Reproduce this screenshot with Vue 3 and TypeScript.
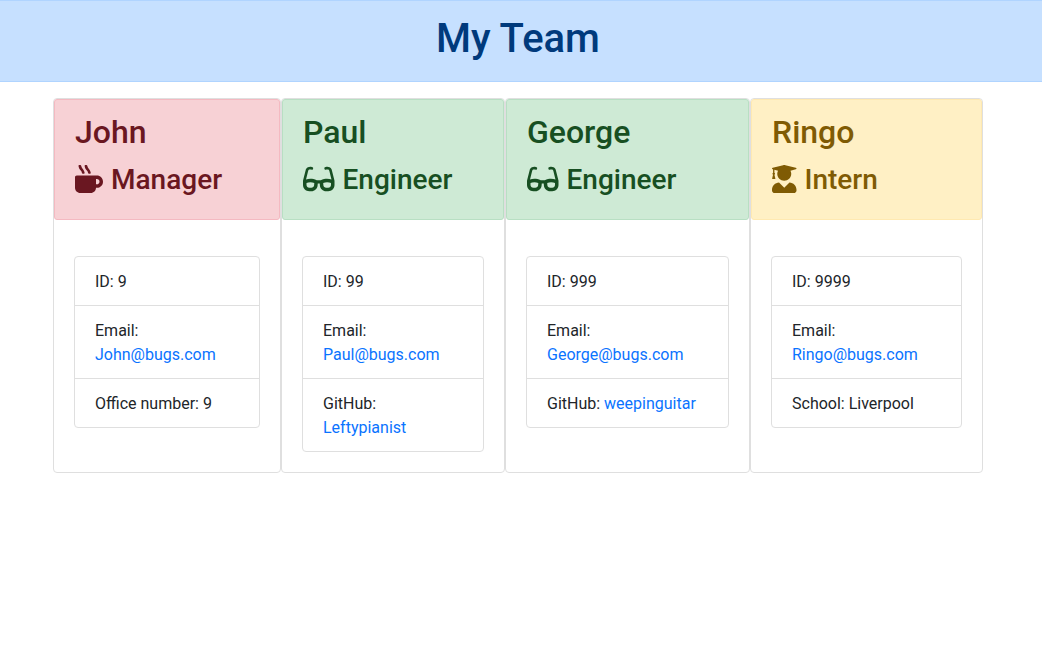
<script setup lang="ts">
type Role = 'Manager' | 'Engineer' | 'Intern'

interface Detail {
  label: string
  value: string
  href?: string
}

interface Member {
  name: string
  role: Role
  details: Detail[]
}

interface Icon {
  viewBox: string
  path: string
}

const icons: Record<Role, Icon> = {
  Manager: {
    viewBox: '0 0 512 512',
    path: 'M127.1 146.5c1.3 7.7 8 13.5 16 13.5h16.5c9.8 0 17.6-8.5 16.3-18-3.8-28.2-16.4-54.2-36.6-74.7-14.4-14.7-23.6-33.3-26.4-53.5C111.8 5.9 105 0 96.8 0H80.4C70.6 0 63 8.5 64.1 18c3.9 31.9 18 61.3 40.6 84.4 12 12.2 19.7 27.5 22.4 44.1zm112 0c1.3 7.7 8 13.5 16 13.5h16.5c9.8 0 17.6-8.5 16.3-18-3.8-28.2-16.4-54.2-36.6-74.7-14.4-14.7-23.6-33.3-26.4-53.5C223.8 5.9 217 0 208.8 0h-16.4c-9.8 0-17.5 8.5-16.3 18 3.9 31.9 18 61.3 40.6 84.4 12 12.2 19.7 27.5 22.4 44.1zM400 192H32c-17.7 0-32 14.3-32 32v192c0 53 43 96 96 96h192c53 0 96-43 96-96h16c61.8 0 112-50.2 112-112s-50.2-112-112-112zm0 160h-16v-96h16c26.5 0 48 21.5 48 48s-21.5 48-48 48z',
  },
  Engineer: {
    viewBox: '0 0 576 512',
    path: 'M574.1 280.37L528.75 98.66c-5.91-23.7-21.59-44.05-43-55.81-21.44-11.73-46.97-14.11-70.19-6.33l-15.25 5.08c-8.39 2.79-12.92 11.86-10.12 20.24l5.06 15.18c2.79 8.38 11.85 12.91 20.23 10.12l13.18-4.39c10.87-3.62 23-3.57 33.16 1.73 10.29 5.37 17.57 14.56 20.37 25.82l38.46 153.82c-22.19-6.81-49.79-12.46-81.2-12.46-34.77 0-73.98 7.02-114.85 26.74h-73.18c-40.87-19.74-80.08-26.75-114.86-26.75-31.42 0-59.02 5.65-81.21 12.46l38.46-153.83c2.79-11.25 10.09-20.45 20.38-25.81 10.16-5.3 22.28-5.35 33.15-1.73l13.17 4.39c8.38 2.79 17.44-1.74 20.23-10.12l5.06-15.18c2.8-8.38-1.73-17.45-10.12-20.24l-15.25-5.08c-23.22-7.78-48.75-5.41-70.19 6.33-21.41 11.77-37.09 32.11-43 55.8L1.9 280.37A64.218 64.218 0 0 0 0 295.86v70.25C0 429.01 51.58 480 115.2 480h37.12c60.28 0 110.37-45.94 114.88-105.37l2.93-38.63h35.75l2.93 38.63C313.31 434.06 363.4 480 423.68 480h37.12c63.62 0 115.2-50.99 115.2-113.88v-70.25c0-5.23-.64-10.43-1.9-15.5zm-370.72 89.42c-1.97 25.91-24.4 46.21-51.06 46.21H115.2C86.97 416 64 393.62 64 366.11v-37.54c18.12-6.49 43.42-12.92 72.58-12.92 23.86 0 47.26 4.33 69.93 12.92l-3.13 41.22zM512 366.12c0 27.51-22.97 49.88-51.2 49.88h-37.12c-26.67 0-49.1-20.3-51.06-46.21l-3.13-41.22c22.67-8.59 46.08-12.92 69.95-12.92 29.12 0 54.43 6.44 72.55 12.93v37.54z',
  },
  Intern: {
    viewBox: '0 0 448 512',
    path: 'M319.4 320.6L224 416l-95.4-95.4C57.1 323.7 0 382.2 0 454.4v9.6c0 26.5 21.5 48 48 48h352c26.5 0 48-21.5 48-48v-9.6c0-72.2-57.1-130.7-128.6-133.8zM13.6 79.8l6.4 1.5v58.4c-7 4.2-12 11.5-12 20.3 0 8.4 4.6 15.4 11.1 19.7L3.5 242c-1.7 6.9 2.1 14 7.6 14h41.8c5.5 0 9.3-7.1 7.6-14l-15.6-62.3C51.4 175.4 56 168.4 56 160c0-8.8-5-16.1-12-20.3V87.1l66 15.9c-8.6 17.2-14 36.4-14 57 0 70.7 57.3 128 128 128s128-57.3 128-128c0-20.6-5.3-39.8-14-57l96.3-23.2c18.2-4.4 18.2-27.1 0-31.5l-190.4-46c-13-3.1-26.7-3.1-39.7 0L13.6 48.2c-18.1 4.4-18.1 27.2 0 31.6z',
  },
}

const email = (address: string): Detail => ({
  label: 'Email',
  value: address,
  href: `mailto:${address}`,
})

const github = (user: string): Detail => ({
  label: 'GitHub',
  value: user,
  href: `https://github.com/${user}`,
})

const team: Member[] = [
  {
    name: 'John',
    role: 'Manager',
    details: [{ label: 'ID', value: '9' }, email('John@bugs.com'), { label: 'Office number', value: '9' }],
  },
  {
    name: 'Paul',
    role: 'Engineer',
    details: [{ label: 'ID', value: '99' }, email('Paul@bugs.com'), github('Leftypianist')],
  },
  {
    name: 'George',
    role: 'Engineer',
    details: [{ label: 'ID', value: '999' }, email('George@bugs.com'), github('weepinguitar')],
  },
  {
    name: 'Ringo',
    role: 'Intern',
    details: [{ label: 'ID', value: '9999' }, email('Ringo@bugs.com'), { label: 'School', value: 'Liverpool' }],
  },
]
</script>

<template>
  <div class="page">
    <header class="banner">
      <h1>My Team</h1>
    </header>
    <main class="team">
      <article v-for="member in team" :key="member.name" class="card">
        <div class="card-head" :class="member.role.toLowerCase()">
          <h2>{{ member.name }}</h2>
          <h3>
            <svg class="icon" :viewBox="icons[member.role].viewBox" aria-hidden="true">
              <path :d="icons[member.role].path" fill="currentColor" />
            </svg>
            <span>{{ member.role }}</span>
          </h3>
        </div>
        <div class="card-body">
          <ul class="details">
            <li v-for="detail in member.details" :key="detail.label">
              {{ detail.label }}:
              <a v-if="detail.href" :href="detail.href">{{ detail.value }}</a>
              <template v-else>{{ detail.value }}</template>
            </li>
          </ul>
        </div>
      </article>
    </main>
  </div>
</template>

<style>
body {
  margin: 0;
  background: #fff;
}
</style>

<style scoped>
.page {
  font-family: Roboto, 'Liberation Sans', sans-serif;
  font-size: 16px;
  line-height: 24px;
  color: #212529;
}

.page *,
.page {
  box-sizing: border-box;
}

h1,
h2,
h3 {
  margin: 0;
  font-weight: 500;
}

.banner {
  padding: 14px 26px 18px 20px;
  border-top: 1px solid #b0d4ff;
  border-bottom: 1px solid #b0d4ff;
  background: #c6e0ff;
  color: #003a7c;
  text-align: center;
}

h1 {
  font-size: 40px;
  line-height: 48px;
}

.team {
  display: grid;
  grid-template-columns: 228fr 224fr 245fr 233fr;
  max-width: 966px;
  margin: 16px auto 0;
  padding: 0 21px 0 15px;
}

.card {
  min-width: 0;
  border: 1px solid #dfdfdf;
  border-radius: 4px;
  background: #fff;
}

.card-head {
  padding: 13px 20px 18px;
  border: 1px solid;
  border-radius: 3px;
}

.manager {
  background: #f7d1d5;
  border-color: #f4b9c1;
  color: #6a1721;
}

.engineer {
  background: #ceead5;
  border-color: #b8dfc3;
  color: #174f22;
}

.intern {
  background: #fff0c5;
  border-color: #ffe9b1;
  color: #7f5b04;
}

h2 {
  margin-bottom: 8px;
  font-size: 32px;
  line-height: 38px;
}

h3 {
  display: flex;
  align-items: center;
  gap: 8px;
  font-size: 28px;
  line-height: 42px;
}

.icon {
  flex: none;
  height: 28px;
  margin-bottom: 2px;
}

.card-body {
  padding: 36px 20px 20px;
}

.details {
  margin: 0;
  padding: 0;
  border: 1px solid #dfdfdf;
  border-radius: 4px;
  list-style: none;
}

.details li {
  padding: 13px 20px 11px;
}

.details li + li {
  border-top: 1px solid #dfdfdf;
}

a {
  color: #0a73ff;
  text-decoration: none;
}

a:hover {
  text-decoration: underline;
}
</style>
